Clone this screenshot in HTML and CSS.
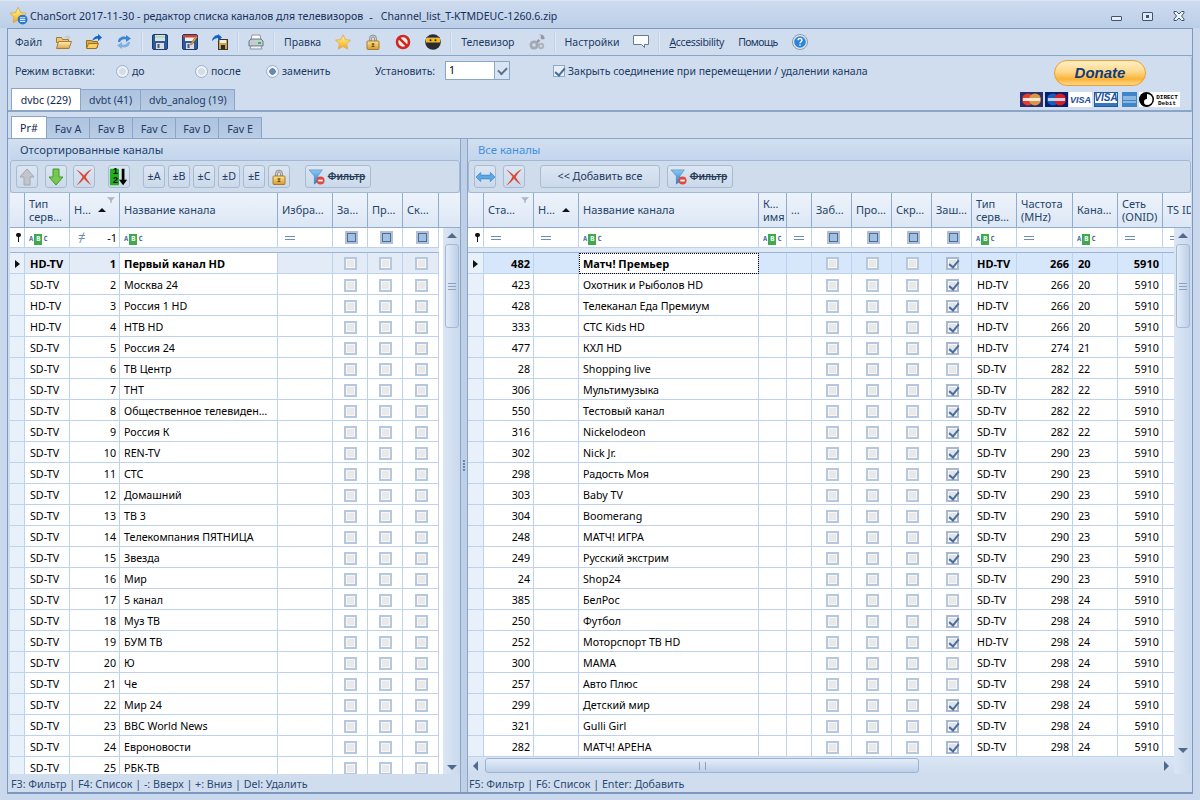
FILE: index.html
```html
<!DOCTYPE html>
<html lang="ru">
<head>
<meta charset="utf-8">
<title>ChanSort</title>
<link rel="stylesheet" href="styles.css">
</head>
<body>
<svg class="defs" width="0" height="0">
<defs>
<linearGradient id="gold" x1="0" y1="0" x2="0" y2="1"><stop offset="0" stop-color="#fff3b0"/><stop offset=".55" stop-color="#fbd04a"/><stop offset="1" stop-color="#f0a020"/></linearGradient>
<linearGradient id="fold" x1="0" y1="0" x2="0" y2="1"><stop offset="0" stop-color="#fdeeb8"/><stop offset="1" stop-color="#dca64c"/></linearGradient>
<linearGradient id="lck" x1="0" y1="0" x2="0" y2="1"><stop offset="0" stop-color="#fbe48e"/><stop offset="1" stop-color="#d89a30"/></linearGradient>
<linearGradient id="fun" x1="0" y1="0" x2="0" y2="1"><stop offset="0" stop-color="#8cc8f4"/><stop offset="1" stop-color="#2a7cc8"/></linearGradient>
<symbol id="i-logo" viewBox="0 0 20 20"><path d="M9 .5l2.800 5.600 6.200.9-4.500 4.300 1 6.200L9 14.600l-5.500 2.900 1-6.200L0 7l6.200-.9z" fill="url(#gold)" stroke="#d8a850"/><circle cx="14" cy="14" r="5.500" fill="#2a78c8"/><path d="M11 12h6M11 14h6M11 16h6" stroke="#fff" stroke-width="1"/></symbol>
<symbol id="i-open" viewBox="0 0 16 16"><path d="M8 3a4 4 0 0 1 5-1l1-1v4h-4l1-1a2.500 2.500 0 0 0-2 0z" fill="#c4ccd6"/><path d="M.5 3.500h5l1 2h6v3h-12z" fill="#eec878" stroke="#a87c30"/><path d="M.5 14.500l2-7h13l-2.500 7z" fill="url(#fold)" stroke="#a87c30"/></symbol>
<symbol id="i-openb" viewBox="0 0 16 16"><path d="M.5 6.500h5l1 1h5v6h-11z" fill="#e0aa40" stroke="#9a7020"/><path d="M.5 14.500l2-5h10l-2 5z" fill="#f6cf60" stroke="#9a7020"/><path d="M6 7c1-3 3-5 6-5V0l4 3.500L12 7V4.500C10 4.500 8 5.500 6 7z" fill="#1464c8"/></symbol>
<symbol id="i-sync" viewBox="0 0 16 16"><path d="M2 8c0-4 4-6.500 8-5V1l5 3.500L10 8V5.500C7 4.500 5 6 4 8z" fill="#3f86d0"/><path d="M14 8c0 4-4 6.500-8 5v2L1 11.500 6 8v2.500c3 1 5-.5 6-2.500z" fill="#7fb0e2"/></symbol>
<symbol id="i-save" viewBox="0 0 16 16"><rect x=".5" y=".5" width="15" height="15" rx="1.500" fill="#2c5a9c" stroke="#1c3c70"/><rect x="3" y="1" width="10" height="6" fill="#d4e4d8"/><path d="M3 3h10" stroke="#a8c8b0"/><rect x="4" y="9" width="8" height="6" fill="#d8dce0"/><rect x="5.500" y="10" width="2" height="4" fill="#50586c"/></symbol>
<symbol id="i-saver" viewBox="0 0 16 16"><rect x=".5" y=".5" width="15" height="15" rx="1.500" fill="#2c5a9c" stroke="#1c3c70"/><rect x="3" y="1" width="10" height="6" fill="#f4f0e8"/><rect x="1" y="1" width="14" height="2.500" fill="#d84030"/><rect x="4" y="9" width="8" height="6" fill="#d8dce0"/><rect x="5.500" y="10" width="2" height="4" fill="#50586c"/><path d="M9 9l5-7 1.500 1-5 7-2 1z" fill="#e8a040" stroke="#905020" stroke-width=".5"/></symbol>
<symbol id="i-saveas" viewBox="0 0 16 16"><rect x="6.500" y="5.500" width="9" height="10" fill="#c8a060" stroke="#403820"/><rect x="8" y="6" width="6" height="3" fill="#f4f0dc"/><rect x="9" y="11" width="4" height="4" fill="#302c20"/><path d="M0 7c0-3 3-6 6-6V0l4 3.500L6 7V4C4 4 2 5 0 7z" fill="#1464c8"/></symbol>
<symbol id="i-print" viewBox="0 0 16 16"><path d="M4 1h8l1 5H3z" fill="#fff" stroke="#8a96a4"/><path d="M1 7l2-2h10l2 2v5H1z" fill="#c4ccd6" stroke="#68747f"/><path d="M3 12h10l1 3H2z" fill="#eef0f4" stroke="#8a96a4"/><rect x="10" y="8" width="3" height="2" fill="#30c040"/></symbol>
<symbol id="i-star" viewBox="0 0 16 16"><path d="M8 .8l2.200 4.800 5.300.6-3.900 3.600 1.100 5.300L8 12.400l-4.700 2.700 1.100-5.300L.5 6.200l5.300-.6z" fill="url(#gold)" stroke="#e0b060"/></symbol>
<symbol id="i-lock" viewBox="0 0 16 16"><path d="M4.500 7V4.500a3.500 3.500 0 0 1 7 0V7h-2V4.500a1.500 1.500 0 0 0-3 0V7z" fill="#c8ccd0" stroke="#7c7c70" stroke-width=".7"/><rect x="2" y="7" width="12" height="8.500" rx="1" fill="url(#lck)" stroke="#a87c30"/><path d="M8 9v4M6.500 10h3M6.500 12.500h3" stroke="#704810" stroke-width="1"/></symbol>
<symbol id="i-stop" viewBox="0 0 16 16"><circle cx="8" cy="8" r="6" fill="#f4ece8" stroke="#cc2a20" stroke-width="2.600"/><path d="M3.800 12.200l8.400-8.400" stroke="#cc2a20" stroke-width="2.600" transform="rotate(90 8 8)"/></symbol>
<symbol id="i-ninja" viewBox="0 0 16 16"><circle cx="8" cy="8" r="7.800" fill="#2c2c2c"/><rect x="1" y="4" width="14" height="4.500" fill="#f0b820"/><circle cx="5.500" cy="6.300" r="1" fill="#222"/><circle cx="10.500" cy="6.300" r="1" fill="#222"/><path d="M1 3.500h14" stroke="#666"/></symbol>
<symbol id="i-wrench" viewBox="0 0 16 16"><path d="M9.500 1a4 4 0 0 1 6 4L13 5.500 11.500 4 12 1.300zM9.500 5l1.700 1.700-4 4L5.500 9z" fill="#9299a3"/><circle cx="5" cy="11" r="4.500" fill="#a2a9b2"/><circle cx="5" cy="11" r="1.800" fill="#d0ddee"/><circle cx="12" cy="12" r="3.200" fill="#aeb4bc"/><circle cx="12" cy="12" r="1.200" fill="#d0ddee"/></symbol>
<symbol id="i-msg" viewBox="0 0 16 16"><path d="M.5 1.500h15v9h-4v3l-3-3h-8z" fill="#fafbfd" stroke="#6e7a88"/></symbol>
<symbol id="i-help" viewBox="0 0 16 16"><circle cx="8" cy="8" r="7.500" fill="#e4e8ee" stroke="#8c98a8"/><circle cx="8" cy="8" r="5.800" fill="#2a84dc"/><path d="M6 6.300c0-2.400 4-2.400 4 0 0 1.400-2 1.400-2 3" fill="none" stroke="#fff" stroke-width="1.400"/><rect x="7.300" y="10.300" width="1.400" height="1.400" fill="#fff"/></symbol>
<symbol id="i-up" viewBox="0 0 18 18"><path d="M9 1l7 8h-4v8H6V9H2z" fill="#c2c6cc" stroke="#a2a6ae"/></symbol>
<symbol id="i-down" viewBox="0 0 18 18"><path d="M9 17l7-8h-4V1H6v8H2z" fill="#78c850" stroke="#3c9a28"/></symbol>
<symbol id="i-x" viewBox="0 0 18 18"><path d="M1 1.500c3.500 1.500 6 3.800 8 6 2-3 4.500-5 8-6.500-2.500 2.500-4.500 5-6.300 8 1.500 2.500 3.300 5 5.300 8-3-2-5-4-7-6.300-2 2.500-4 4.500-7.500 6.800 2.500-3 4.500-6 6-8.800C6 7 4 4 1 1.500z" fill="#d84a3a"/></symbol>
<symbol id="i-sort" viewBox="0 0 22 20"><rect x="1" y="1" width="10" height="18" rx="1" fill="#20b020"/><path d="M14 1h3v12h3l-4.500 6L11 13h3z" fill="#000"/></symbol>
<symbol id="i-filter" viewBox="0 0 18 18"><path d="M0 1h15l-5 7v6l-4 3V8z" fill="url(#fun)" stroke="#2a6ca8" stroke-width=".5"/><circle cx="13" cy="13" r="4.500" fill="#e04840"/><rect x="10.500" y="12" width="5" height="2" fill="#fff"/></symbol>
<symbol id="i-swap" viewBox="0 0 20 10"><path d="M0 5l5-5v3h10V0l5 5-5 5V7H5v3z" fill="#5ca8e4" stroke="#2a78c0" stroke-width=".6"/></symbol>
</defs>
</svg>

<header class="title">
<svg class="logo"><use href="#i-logo"/></svg>
<span class="title-text">ChanSort 2017-11-30 - редактор списка каналов для телевизоров</span><span class="title-dash">-</span><span class="title-file">Channel_list_T-KTMDEUC-1260.6.zip</span>
<span class="wbtns"><i class="wmin"></i><i class="wmax"></i><svg class="wclose" viewBox="0 0 12 10"><path d="M1 .5h2.500L6 3l2.500-2.500H11V2L8.500 5 11 8v1.500H8.500L6 7 3.500 9.500H1V8l2.500-3L1 2z" fill="#eef3f9" stroke="#3c5472"/></svg></span>
</header>

<div class="win">
<nav class="tb">
<span class="mi">Файл</span>
<svg class="ic"><use href="#i-open"/></svg><svg class="ic"><use href="#i-openb"/></svg><svg class="ic"><use href="#i-sync"/></svg>
<b class="sep"></b>
<svg class="ic"><use href="#i-save"/></svg><svg class="ic"><use href="#i-saver"/></svg><svg class="ic"><use href="#i-saveas"/></svg>
<b class="sep"></b>
<svg class="ic"><use href="#i-print"/></svg>
<b class="sep"></b>
<span class="mi">Правка</span>
<svg class="ic"><use href="#i-star"/></svg><svg class="ic"><use href="#i-lock"/></svg><svg class="ic"><use href="#i-stop"/></svg><svg class="ic"><use href="#i-ninja"/></svg>
<b class="sep"></b>
<span class="mi">Телевизор</span>
<svg class="ic"><use href="#i-wrench"/></svg>
<b class="sep"></b>
<span class="mi">Настройки</span>
<svg class="ic"><use href="#i-msg"/></svg>
<b class="sep"></b>
<span class="mi nar"><u>A</u>ccessibility</span>
<span class="mi nar2">Помощь</span>
<svg class="ic"><use href="#i-help"/></svg>
</nav>

<section class="opts">
<div class="opts-main">
<div class="optrow">
<span class="o-mode">Режим вставки:</span>
<i class="radio"></i><span class="o-a">до</span>
<i class="radio"></i><span class="o-b">после</span>
<i class="radio sel"></i><span class="o-c">заменить</span>
<span class="o-set">Установить:</span>
<span class="combo"><span class="combo-v">1</span><span class="combo-b"></span></span>
<i class="chk"></i><span>Закрыть соединение при перемещении / удалении канала</span>
</div>
<div class="tabs">
<span class="tab on">dvbc (229)</span><span class="tab">dvbt (41)</span><span class="tab">dvb_analog (19)</span>
</div>
</div>
<div class="donate-box">
<span class="donate">Donate</span>
<div class="cards">
<svg class="card" width="23" height="15" viewBox="0 0 23 15"><rect width="23" height="15" fill="#2c2c6c"/><circle cx="8" cy="7.500" r="6" fill="#e03c30"/><circle cx="15" cy="7.500" r="6" fill="#d89a40"/><rect x="3" y="6" width="17" height="3" fill="#f0e8e0"/></svg>
<svg class="card c2" width="23" height="15" viewBox="0 0 23 15"><rect width="23" height="15" fill="#0c1c6c"/><circle cx="8" cy="7.500" r="6" fill="#1060c0"/><circle cx="15" cy="7.500" r="6" fill="#d81c20"/><rect x="3" y="6" width="17" height="3" fill="#c8d0f0"/></svg>
<svg class="card c3" width="23" height="15" viewBox="0 0 23 15"><rect width="23" height="15" fill="#fff"/><text x="11.500" y="11" class="visa">VISA</text></svg>
<svg class="card c4" width="24" height="15" viewBox="0 0 24 15"><rect width="24" height="15" fill="#fff"/><rect x=".5" y=".5" width="23" height="14" fill="none" stroke="#1c5ca8"/><text x="12" y="9" class="visa big">VISA</text><rect x="1" y="11" width="22" height="3" fill="#3a74b8"/></svg>
<svg class="card c5" width="15" height="15" viewBox="0 0 15 15"><rect width="15" height="15" fill="#3f86c8"/><path d="M1 5h13M1 7h13M1 10h13" stroke="#d8e8f8" stroke-width="1"/></svg>
<svg class="card c6" width="41" height="15" viewBox="0 0 41 15"><rect width="41" height="15" fill="#fff"/><circle cx="7.500" cy="7.500" r="7.500" fill="#000"/><path d="M8 2a5.500 5.500 0 0 1 0 11 3 3 0 0 1 0-6z" fill="#fff"/><text x="28" y="7" class="ddt">DIRECT</text><text x="28" y="13" class="ddt">Debit</text></svg>
</div>
</div>
</section>

<div class="tabs2">
<span class="tab on">Pr#</span><span class="tab">Fav A</span><span class="tab">Fav B</span><span class="tab">Fav C</span><span class="tab">Fav D</span><span class="tab">Fav E</span>
</div>

<main class="panes">
<section class="pane pane-l">
<h2 class="phead">Отсортированные каналы</h2>
<div class="ptools">
<button class="btn sq"><svg class="bi"><use href="#i-up"/></svg></button>
<button class="btn sq m4"><svg class="bi"><use href="#i-down"/></svg></button>
<button class="btn sq m3"><svg class="bi"><use href="#i-x"/></svg></button>
<button class="btn sq m10 sortb"><svg class="bis" viewBox="0 0 22 20"><use href="#i-sort"/></svg><span class="s1">1</span><span class="s2">2</span></button>
<button class="btn sq m10">±A</button>
<button class="btn sq">±B</button>
<button class="btn sq">±C</button>
<button class="btn sq">±D</button>
<button class="btn sq">±E</button>
<button class="btn sq"><svg class="bi16"><use href="#i-lock"/></svg></button>
<button class="btn flt m12"><svg class="bi16"><use href="#i-filter"/></svg><s>Фильтр</s></button>
</div>
<div class="grid">
<table class="gh gh-l">
<colgroup><col class="c15"><col class="c45"><col class="c50"><col class="c158"><col class="c55"><col class="c35"><col class="c35"><col class="c36"><col class="c21"></colgroup>
<tr><th></th><th>Тип<br>серв…</th><th class="hs"><span>Н…</span><i class="sa"></i><svg class="hf" viewBox="0 0 10 7"><path d="M0 0h10L6 4v3H4V4z"/></svg></th><th>Название канала</th><th>Избра…</th><th>За…</th><th>Пр…</th><th>Ск…</th><th></th></tr>
</table>
<div class="gbody">
<div class="gmain">
<table class="gt lt">
<colgroup><col class="c15"><col class="c45"><col class="c50"><col class="c158"><col class="c55"><col class="c35"><col class="c35"><col class="c36"></colgroup>
<tr class="fr"><td><i class="key"></i><td><span class="abc">A<b>B</b>C</span><td class="fne"><span class="ne">≠</span><span>-1</span><td><span class="abc">A<b>B</b>C</span><td><i class="eq"></i><td><i class="fc"></i><td><i class="fc"></i><td><i class="fc"></i>
<tr class="gapr"><td colspan="8">
<tr class="sel"><td><i class="arr"></i><td>HD-TV<td>1<td>Первый канал HD<td><td><i></i><td><i></i><td><i></i>
<tr><td><td>SD-TV<td>2<td>Москва 24<td><td><i></i><td><i></i><td><i></i>
<tr><td><td>HD-TV<td>3<td>Россия 1 HD<td><td><i></i><td><i></i><td><i></i>
<tr><td><td>HD-TV<td>4<td>НТВ HD<td><td><i></i><td><i></i><td><i></i>
<tr><td><td>SD-TV<td>5<td>Россия 24<td><td><i></i><td><i></i><td><i></i>
<tr><td><td>SD-TV<td>6<td>ТВ Центр<td><td><i></i><td><i></i><td><i></i>
<tr><td><td>SD-TV<td>7<td>ТНТ<td><td><i></i><td><i></i><td><i></i>
<tr><td><td>SD-TV<td>8<td>Общественное телевиден…<td><td><i></i><td><i></i><td><i></i>
<tr><td><td>SD-TV<td>9<td>Россия К<td><td><i></i><td><i></i><td><i></i>
<tr><td><td>SD-TV<td>10<td>REN-TV<td><td><i></i><td><i></i><td><i></i>
<tr><td><td>SD-TV<td>11<td>СТС<td><td><i></i><td><i></i><td><i></i>
<tr><td><td>SD-TV<td>12<td>Домашний<td><td><i></i><td><i></i><td><i></i>
<tr><td><td>SD-TV<td>13<td>ТВ 3<td><td><i></i><td><i></i><td><i></i>
<tr><td><td>SD-TV<td>14<td>Телекомпания ПЯТНИЦА<td><td><i></i><td><i></i><td><i></i>
<tr><td><td>SD-TV<td>15<td>Звезда<td><td><i></i><td><i></i><td><i></i>
<tr><td><td>SD-TV<td>16<td>Мир<td><td><i></i><td><i></i><td><i></i>
<tr><td><td>SD-TV<td>17<td>5 канал<td><td><i></i><td><i></i><td><i></i>
<tr><td><td>SD-TV<td>18<td>Муз ТВ<td><td><i></i><td><i></i><td><i></i>
<tr><td><td>SD-TV<td>19<td>БУМ ТВ<td><td><i></i><td><i></i><td><i></i>
<tr><td><td>SD-TV<td>20<td>Ю<td><td><i></i><td><i></i><td><i></i>
<tr><td><td>SD-TV<td>21<td>Че<td><td><i></i><td><i></i><td><i></i>
<tr><td><td>SD-TV<td>22<td>Мир 24<td><td><i></i><td><i></i><td><i></i>
<tr><td><td>SD-TV<td>23<td>BBC World News<td><td><i></i><td><i></i><td><i></i>
<tr><td><td>SD-TV<td>24<td>Евроновости<td><td><i></i><td><i></i><td><i></i>
<tr><td><td>SD-TV<td>25<td>РБК-ТВ<td><td><i></i><td><i></i><td><i></i>
</table>
</div>
<div class="vs"><i class="ua"></i><div class="vthumb"><i class="grip"></i></div><i class="da"></i></div>
</div>
</div>
<footer class="status">F3: Фильтр | F4: Список | -: Вверх | +: Вниз | Del: Удалить</footer>
</section>

<div class="split"><i></i><i></i><i></i><i></i></div>

<section class="pane pane-r">
<h2 class="phead act">Все каналы</h2>
<div class="ptools">
<button class="btn sq"><svg class="swap" viewBox="0 0 20 10"><use href="#i-swap"/></svg></button>
<button class="btn sq m4"><svg class="bi"><use href="#i-x"/></svg></button>
<button class="btn add">&lt;&lt; Добавить все</button>
<button class="btn flt m4"><svg class="bi16"><use href="#i-filter"/></svg><s>Фильтр</s></button>
</div>
<div class="grid">
<table class="gh gh-r">
<colgroup><col class="c16"><col class="c50"><col class="c45"><col class="c180"><col class="c28"><col class="c25"><col class="c40"><col class="c40"><col class="c40"><col class="c40"><col class="c45"><col class="c56"><col class="c45"><col class="c45"><col class="c28"></colgroup>
<tr><th></th><th class="hs2"><span>Ста…</span><svg class="hf" viewBox="0 0 10 7"><path d="M0 0h10L6 4v3H4V4z"/></svg></th><th class="hs"><span>Н…</span><i class="sa"></i></th><th>Название канала</th><th>К…<br>имя</th><th>…</th><th>Заб…</th><th>Про…</th><th>Скр…</th><th>Заш…</th><th>Тип<br>серв…</th><th>Частота<br>(MHz)</th><th>Кана…</th><th>Сеть<br>(ONID)</th><th class="clip">TS ID</th></tr>
</table>
<div class="gbody">
<div class="gmain gmain-r">
<div class="gclip">
<table class="gt rt">
<colgroup><col class="c16"><col class="c50"><col class="c45"><col class="c180"><col class="c28"><col class="c25"><col class="c40"><col class="c40"><col class="c40"><col class="c40"><col class="c45"><col class="c56"><col class="c45"><col class="c45"><col class="c28"></colgroup>
<tr class="fr"><td><i class="key"></i><td><i class="eq"></i><td><i class="eq"></i><td><span class="abc">A<b>B</b>C</span><td><span class="abc">A<b>B</b>C</span><td><i class="eq"></i><td><i class="fc"></i><td><i class="fc"></i><td><i class="fc"></i><td><i class="fc"></i><td><span class="abc">A<b>B</b>C</span><td><i class="eq"></i><td><span class="abc">A<b>B</b>C</span><td><i class="eq"></i><td><i class="eq"></i>
<tr class="gapr"><td colspan="15">
<tr class="sel"><td><i class="arr"></i><td>482<td><td class="cur">Матч! Премьер<td><td><td><i></i><td><i></i><td><i></i><td><i class="on"></i><td>HD-TV<td>266<td>20<td>5910<td>
<tr><td><td>423<td><td>Охотник и Рыболов HD<td><td><td><i></i><td><i></i><td><i></i><td><i class="on"></i><td>HD-TV<td>266<td>20<td>5910<td>
<tr><td><td>428<td><td>Телеканал Еда Премиум<td><td><td><i></i><td><i></i><td><i></i><td><i class="on"></i><td>HD-TV<td>266<td>20<td>5910<td>
<tr><td><td>333<td><td>СТС Kids HD<td><td><td><i></i><td><i></i><td><i></i><td><i class="on"></i><td>HD-TV<td>266<td>20<td>5910<td>
<tr><td><td>477<td><td>КХЛ HD<td><td><td><i></i><td><i></i><td><i></i><td><i class="on"></i><td>HD-TV<td>274<td>21<td>5910<td>
<tr><td><td>28<td><td>Shopping live<td><td><td><i></i><td><i></i><td><i></i><td><i></i><td>SD-TV<td>282<td>22<td>5910<td>
<tr><td><td>306<td><td>Мультимузыка<td><td><td><i></i><td><i></i><td><i></i><td><i class="on"></i><td>SD-TV<td>282<td>22<td>5910<td>
<tr><td><td>550<td><td>Тестовый канал<td><td><td><i></i><td><i></i><td><i></i><td><i class="on"></i><td>SD-TV<td>282<td>22<td>5910<td>
<tr><td><td>316<td><td>Nickelodeon<td><td><td><i></i><td><i></i><td><i></i><td><i class="on"></i><td>SD-TV<td>282<td>22<td>5910<td>
<tr><td><td>302<td><td>Nick Jr.<td><td><td><i></i><td><i></i><td><i></i><td><i class="on"></i><td>SD-TV<td>290<td>23<td>5910<td>
<tr><td><td>298<td><td>Радость Моя<td><td><td><i></i><td><i></i><td><i></i><td><i class="on"></i><td>SD-TV<td>290<td>23<td>5910<td>
<tr><td><td>303<td><td>Baby TV<td><td><td><i></i><td><i></i><td><i></i><td><i class="on"></i><td>SD-TV<td>290<td>23<td>5910<td>
<tr><td><td>304<td><td>Boomerang<td><td><td><i></i><td><i></i><td><i></i><td><i class="on"></i><td>SD-TV<td>290<td>23<td>5910<td>
<tr><td><td>248<td><td>МАТЧ! ИГРА<td><td><td><i></i><td><i></i><td><i></i><td><i class="on"></i><td>SD-TV<td>290<td>23<td>5910<td>
<tr><td><td>249<td><td>Русский экстрим<td><td><td><i></i><td><i></i><td><i></i><td><i class="on"></i><td>SD-TV<td>290<td>23<td>5910<td>
<tr><td><td>24<td><td>Shop24<td><td><td><i></i><td><i></i><td><i></i><td><i></i><td>SD-TV<td>290<td>23<td>5910<td>
<tr><td><td>385<td><td>БелРос<td><td><td><i></i><td><i></i><td><i></i><td><i></i><td>SD-TV<td>298<td>24<td>5910<td>
<tr><td><td>250<td><td>Футбол<td><td><td><i></i><td><i></i><td><i></i><td><i class="on"></i><td>SD-TV<td>298<td>24<td>5910<td>
<tr><td><td>252<td><td>Моторспорт ТВ HD<td><td><td><i></i><td><i></i><td><i></i><td><i class="on"></i><td>HD-TV<td>298<td>24<td>5910<td>
<tr><td><td>300<td><td>МАМА<td><td><td><i></i><td><i></i><td><i></i><td><i></i><td>SD-TV<td>298<td>24<td>5910<td>
<tr><td><td>257<td><td>Авто Плюс<td><td><td><i></i><td><i></i><td><i></i><td><i></i><td>SD-TV<td>298<td>24<td>5910<td>
<tr><td><td>299<td><td>Детский мир<td><td><td><i></i><td><i></i><td><i></i><td><i class="on"></i><td>SD-TV<td>298<td>24<td>5910<td>
<tr><td><td>321<td><td>Gulli Girl<td><td><td><i></i><td><i></i><td><i></i><td><i class="on"></i><td>SD-TV<td>298<td>24<td>5910<td>
<tr><td><td>282<td><td>МАТЧ! АРЕНА<td><td><td><i></i><td><i></i><td><i></i><td><i class="on"></i><td>SD-TV<td>298<td>24<td>5910<td>
<tr><td><td>&nbsp;<td><td><td><td><td><td><td><td><td><td><td><td><td>
</table>
</div>
<div class="hs-bar"><i class="la"></i><div class="hthumb"><i class="hgrip"></i></div><i class="ra"></i></div>
</div>
<div class="vs vs-r"><i class="ua"></i><div class="vthumb"><i class="grip"></i></div><i class="da"></i></div>
</div>
</div>
<footer class="status">F5: Фильтр | F6: Список | Enter: Добавить</footer>
</section>
</main>
</div>
</body>
</html>
```
FILE: styles.css
```css
*{box-sizing:border-box}
html,body{margin:0;padding:0}
body{width:1200px;height:800px;overflow:hidden;background:#c9d8ec;font:11px/13px "Noto Sans","Liberation Sans",sans-serif;color:#1b3a63;display:flex;flex-direction:column}
i{display:block;font-style:normal}
.defs{display:block;width:0;height:0}
svg{display:block}

.title{height:28px;flex:none;display:flex;align-items:center;padding:3px 0 0 10px;background:linear-gradient(#cddbee,#bccfe8);border-top:1px solid #dfe8f4}
.logo{width:18px;height:18px;margin-right:2px}
.title-text{font-size:10.6px;color:#17305a;white-space:nowrap}
.title-dash{margin:0 8px 0 6px;color:#17305a}
.title-file{font-size:10.55px;color:#17305a;white-space:nowrap}
.wbtns{margin-left:auto;display:flex;align-items:center;margin-right:15px}
.wmin{width:11px;height:5px;border:1px solid #3c5472;border-radius:1px;background:#e8eef6;margin:5px 20px 0 0}
.wmax{width:11px;height:9px;border:1px solid #3c5472;border-radius:1px;background:#dfe8f4;margin-right:20px}
.wmax::after{content:"";display:block;width:3px;height:3px;background:#3c5472;margin:2px auto 0}
.wclose{width:12px;height:10px}

.win{flex:none;width:1186px;height:766px;margin-left:7px;border:1px solid #7d99bf;border-bottom-width:2px;background:#d0ddee;display:flex;flex-direction:column}

.tb{height:27px;flex:none;display:flex;align-items:center;gap:14px;padding-left:7px;border-bottom:1px solid #8ba5c6;background:#d0ddee;font-size:10.5px}
.mi{white-space:nowrap}
.mi u{text-decoration:underline}
.nar{letter-spacing:-.35px}
.nar2{letter-spacing:-.65px}
.ic{width:16px;height:16px;flex:none}
.sep{width:2px;height:20px;margin:0 -5px;background:linear-gradient(90deg,#b4c6de,#eef4fb);flex:none}

.opts{height:56px;flex:none;display:flex;border-bottom:2px solid #8ba5c6;border-right:1px solid #a9bdd7;border-radius:0 3px 0 0;font-size:10.5px}
.opts-main{flex:1;display:flex;flex-direction:column;justify-content:space-between}
.optrow{height:30px;display:flex;align-items:center;padding:0 0 0 7px}
.o-mode{width:101px}
.radio{width:13px;height:13px;border-radius:50%;background:radial-gradient(circle,#d6dde6 0 3px,#eef2f7 4px,#eef2f7 5px);border:1px solid #9bb0cb;margin-right:3px}
.radio.sel{background:radial-gradient(circle,#6a88ac 0 3px,#eef2f7 3.500px)}
.o-a{width:63px}
.o-b{width:55px}
.o-c{width:93px}
.o-set{width:70px}
.combo{display:flex;width:65px;height:19px;border:1px solid #8ba5c6;background:#fff;margin:-1px 43px 0 0}
.combo-v{flex:1;padding:2px 0 0 3px;color:#000}
.combo-b{width:15px;border-left:1px solid #8ba5c6;background:#d8e4f2}
.combo-b::after{content:"";display:block;width:7px;height:4px;border-left:2px solid #5a7090;border-bottom:2px solid #5a7090;transform:rotate(-45deg);margin:5px 0 0 3px}
.chk{width:12px;height:12px;border:1px solid #8fa8c8;background:#e8eef6;margin-right:3px}
.chk::after{content:"";display:block;width:4px;height:8px;border-right:2px solid #4a6c9c;border-bottom:2px solid #4a6c9c;transform:rotate(40deg);margin:0 0 0 3px}
.tabs{display:flex;height:22px;padding-left:3px;align-items:flex-end}
.tab{display:block;height:21px;padding:4px 8px 0;border:1px solid #8ba5c6;border-bottom:0;margin-right:-1px;background:linear-gradient(#aec3df,#b9cce5);color:#1d3c66;white-space:nowrap;text-align:center}
.tab.on{background:#fff;height:22px;padding-top:5px;z-index:1;color:#10284c}
.tabs .tab:nth-child(1){width:70px}
.tabs .tab:nth-child(2){width:61px}
.tabs .tab:nth-child(3){width:95px}
.donate-box{width:173px;flex:none;display:flex;flex-direction:column;align-items:flex-start}
.donate{width:92px;height:26px;margin:4px 0 0 36px;border:1px solid #f0a030;border-radius:13px;background:linear-gradient(#fff0c8,#fdd88a 45%,#fbb338 75%,#ffd78a);color:#123c78;font:italic bold 15px/24px "Liberation Sans",sans-serif;text-align:center;display:block}
.cards{display:flex;align-items:center;margin:6px 0 0 2px}
.c2{margin-left:2px}
.c3{margin-left:1px}
.c4{margin-left:2px}
.c5{margin-left:4px}
.c6{margin-left:2px}
.visa{font:italic bold 9px "Liberation Sans",sans-serif;fill:#1c4c98;text-anchor:middle}
.visa.big{font-size:10px}
.ddt{font:bold 6px "Liberation Mono",monospace;fill:#000;text-anchor:middle}

.tabs2{height:27px;flex:none;display:flex;align-items:flex-end;padding-left:3px;border-bottom:1px solid #8ba5c6;font-size:10.7px}
.tabs2 .tab{width:44px;padding:5px 0 0}
.tabs2 .tab.on{width:36px;padding-top:5px}

.panes{flex:1;min-height:0;display:flex;padding:0 1px 0 2px;background:#d0ddee}
.pane{display:flex;flex-direction:column;min-width:0}
.pane-l{width:450px}
.pane-r{width:723px}
.split{width:8px;flex:none;background:#bfd0e6;border-left:1px solid #8ba5c6;border-right:1px solid #8ba5c6;display:flex;flex-direction:column;justify-content:center;align-items:center;gap:1px}
.split i{width:2px;height:2px;background:#6a86aa}
.phead{height:21px;flex:none;margin:0;padding:4px 0 0 10px;font-size:11.3px;font-weight:400;line-height:13px;color:#24436c;background:linear-gradient(#d3dfef,#c2d6ee)}
.phead.act{color:#3f8fe0}
.ptools{height:33px;flex:none;display:flex;align-items:center;gap:3px;padding:0 0 0 5px;border:1px solid #a2b8d4;border-radius:3px;background:#cfdcec}
.btn{height:23px;border:1px solid #a9bbd3;border-radius:3px;background:linear-gradient(#dce6f3,#cbd9ea);display:flex;align-items:center;justify-content:center;padding:0;font:10.7px/13px "Noto Sans","Liberation Sans",sans-serif;color:#1f3b62;flex:none;position:relative}
.sq{width:22px}
.m3{margin-left:3px}
.m4{margin-left:4px}
.m10{margin-left:10px}
.m12{margin-left:12px}
.bi{width:18px;height:18px}
.bi16{width:16px;height:16px}
.bis{width:20px;height:20px}
.s1,.s2{font:bold 9px/9px "Liberation Sans",sans-serif;color:#000;position:absolute;left:4px}
.s1{top:1px}
.s2{top:10px}
.swap{width:19px;height:10px}
.flt{width:66px;gap:3px;padding-right:2px}
.flt s{font-size:10px;font-weight:600;color:#2b3e58}
.add{width:120px;margin-left:12px}

.grid{flex:1;min-height:0;display:flex;flex-direction:column;background:#fff;overflow:hidden}
table{border-collapse:separate;border-spacing:0;table-layout:fixed}
.c15{width:15px}.c16{width:16px}.c21{width:21px}.c25{width:25px}.c28{width:28px}.c35{width:35px}.c36{width:36px}.c40{width:40px}.c45{width:45px}.c50{width:50px}.c55{width:55px}.c56{width:56px}.c158{width:158px}.c180{width:180px}
.gh{flex:none;height:35px}
.gh-l{width:450px}
.gh-r{width:723px}
.gh th{height:35px;padding:0 3px 1px 4px;font-weight:400;text-align:left;line-height:13px;color:#244468;background:linear-gradient(#edf3fb,#dce7f5);border-right:1px solid #92adcb;border-bottom:1px solid #92adcb;white-space:nowrap;overflow:hidden;position:relative}
.gh th:last-child{border-right:0}
.hs span{display:inline-block;width:26px}
.sa{display:inline-block;width:0;height:0;border:4px solid transparent;border-bottom:4px solid #111;border-top:0;vertical-align:2px;margin-left:-2px}
.hf{width:8px;height:6px;position:absolute;top:4px;right:4px;fill:#a8b8c8}
.gbody{flex:1;min-height:0;display:flex}
.gmain{flex:1;min-width:0;overflow:hidden;background:#fff}
.gmain-r{display:flex;flex-direction:column}
.gclip{flex:1;min-height:0;overflow:hidden}
.lt{width:429px}
.rt{width:723px}
.gt td{height:21px;padding:2px 3px 0 4px;border-right:1px solid #bcd2ef;border-bottom:1px solid #bcd2ef;color:#000;white-space:nowrap;overflow:hidden;vertical-align:middle;font-size:10.7px}
.gt tr:not(.fr):not(.gapr) td:first-child{background:#e8f0fa;padding:2px 0 0}
.lt td:nth-child(2){padding-left:5px}
.lt td:nth-child(3),.rt td:nth-child(2),.rt td:nth-child(12),.rt td:nth-child(14){text-align:right}
.rt td:nth-child(11),.rt td:nth-child(13){padding-left:5px}
.gt i{margin:0 auto}
.gt tr:not(.fr) td>i:not(.arr){width:13px;height:13px;border:2px solid #b7c7dc;background:#e9e9e9;box-shadow:inset 0 0 0 1px #f7f7f7}
.gt tr:not(.fr) td>i.on{background:#dfe4ea;border-color:#a9b8cc}
.gt i.on::after{content:"";display:block;width:4px;height:8px;border-right:2px solid #4a6e9c;border-bottom:2px solid #4a6e9c;transform:rotate(40deg);margin:-1px 0 0 3px}
.gt .fr td{height:20px;border-bottom-color:#bcd2ef;background:#fff;padding:0 1px 0 4px}
.gt .gapr td{height:5px;padding:0;background:#dfe9f6;border-right:0;border-bottom:1px solid #9db5d4}
.key{width:6px;height:9px}
.gt .key{margin:0 auto}
.key::before{content:"";display:block;width:5px;height:4px;background:#111;border-radius:2px;margin:0 auto}
.key::after{content:"";display:block;width:1px;height:5px;background:#111;margin:0 auto}
.abc{font:bold 7px/11px "DejaVu Sans Mono","Liberation Mono",monospace;color:#4a6c9c;display:inline-block;white-space:nowrap}
.abc b{display:inline-block;background:#3faa4c;color:#fff;padding:0 2px;margin:0 1px;line-height:11px}
.eq{width:10px;height:4px;border-top:1px solid #6f8db3;border-bottom:1px solid #6f8db3}
.fr td>.eq{margin:0 auto 0 3px}
.gt td.fne{text-align:right;padding-right:2px;font-size:11px}
.ne{float:left;font-size:13px;color:#6f8db3;margin-left:4px}
.fc{width:13px;height:13px;border:2px solid #b0c0d6;background:#a2c0e2;box-shadow:inset 0 0 0 1px #4f6d94}
.gt tr.sel td{background:#e3ebf6;font-weight:700;font-size:11px;padding-top:1px}
.lt tr.sel td:nth-child(4){background:#fff}
.rt tr.sel td{background:#d6e6fb}
.rt tr.sel td.cur{background:#fff;outline:1px dotted #000;outline-offset:-1px}
.arr{width:0;height:0;border:4px solid transparent;border-left:5px solid #111;border-right:0;margin:0 auto!important}

.vs{width:17px;flex:none;background:linear-gradient(90deg,#dbe6f4,#c9d9ec);display:flex;flex-direction:column;align-items:center;padding-top:5px}
.ua{width:0;height:0;border:5px solid transparent;border-bottom:5px solid #4f6a8c;border-top:0}
.da{width:0;height:0;border:5px solid transparent;border-top:5px solid #4f6a8c;border-bottom:0;margin-top:auto;margin-bottom:4px}
.vthumb{width:14px;height:84px;margin-top:6px;border:1px solid #a4bad6;border-radius:3px;background:linear-gradient(90deg,#e2ebf7,#bdd0e8);display:flex;align-items:center;justify-content:center}
.grip{width:8px;height:7px;border-top:1px solid #8aa2c0;border-bottom:1px solid #8aa2c0}
.grip::after{content:"";display:block;height:1px;background:#8aa2c0;margin-top:2px}
.vs-r .da{margin-bottom:21px}
.hs-bar{height:17px;flex:none;display:flex;align-items:center;background:linear-gradient(#dbe6f4,#cfddef);padding-left:5px}
.la{width:0;height:0;border:5px solid transparent;border-right:5px solid #4f6a8c;border-left:0}
.ra{width:0;height:0;border:5px solid transparent;border-left:5px solid #4f6a8c;border-right:0;margin:0 5px 0 auto}
.hthumb{width:434px;height:15px;margin-left:7px;border:1px solid #9db5d4;border-radius:3px;background:linear-gradient(#e4edf8,#bdd0e8);display:flex;align-items:center;justify-content:center}
.hgrip{width:7px;height:8px;border-left:1px solid #8aa2c0;border-right:1px solid #8aa2c0}
.status{height:18px;flex:none;padding:4px 0 0 1px;color:#2a4a72;background:#d0ddee;white-space:nowrap;font-size:10.7px}
```
